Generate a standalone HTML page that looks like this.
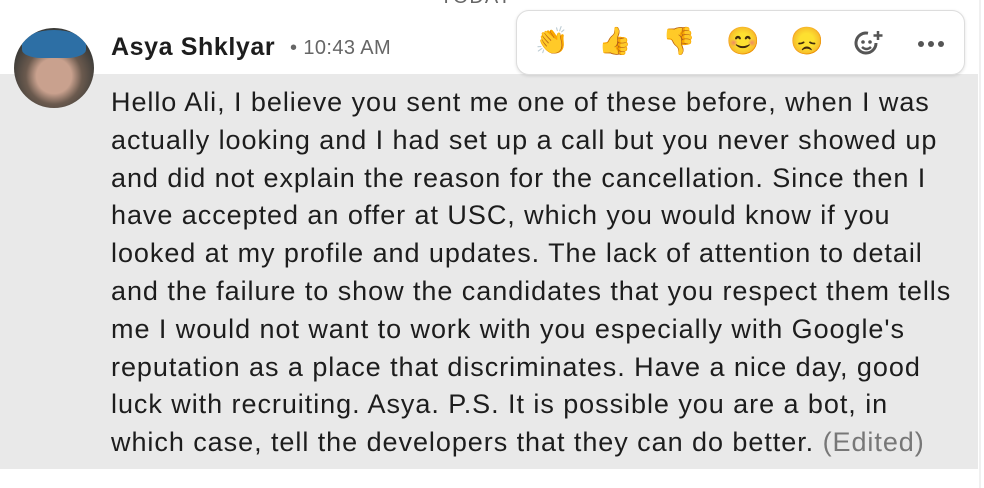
<!DOCTYPE html>
<html><head><meta charset="utf-8"><style>
body{margin:0;width:984px;height:488px;background:#fff;position:relative;overflow:hidden;font-family:"Liberation Sans",Helvetica,Arial,sans-serif;}
.today{position:absolute;left:440px;top:-14px;font-size:20px;color:#666;letter-spacing:1px}
.gray{position:absolute;left:0;top:74px;width:978px;height:395px;background:#e9e9e9}
.edge{position:absolute;left:979px;top:0;width:2px;height:488px;background:#f0f0f0}
.av{position:absolute;left:14px;top:28px;width:80px;height:80px;border-radius:50%;background:radial-gradient(circle at 50% 60%,#c9a18e 0 28%,#6b5a4e 45%,#3b3b38 70%);overflow:hidden}
.hair{position:absolute;left:8px;top:2px;width:64px;height:28px;border-radius:50% 50% 30% 30%;background:#2d6fa5}
.name{position:absolute;left:111px;top:33px;font-size:25px;font-weight:bold;color:#1d1d1d;letter-spacing:0.6px}
.time{position:absolute;left:290px;top:37px;font-size:20px;color:#666;letter-spacing:0.4px}
.msg{position:absolute;left:111px;top:84px;font-size:27px;line-height:37.8px;color:#1d1d1d;letter-spacing:0.95px;white-space:nowrap}
.ed{color:#777}
.bar{position:absolute;left:516px;top:10px;width:447px;height:63px;background:#fff;border:1px solid #ddd;border-radius:13px;box-shadow:0 1px 3px rgba(0,0,0,.12)}
.bar span{position:absolute;top:13px;font-size:27px;line-height:34px;font-family:"Noto Color Emoji","DejaVu Sans",sans-serif}
</style></head><body>
<div class="today">TODAY</div>
<div class="gray"></div>
<div class="edge"></div>
<div class="av"><div class="hair"></div></div>
<div class="name">Asya Shklyar</div>
<div class="time">• 10:43 AM</div>
<div class="msg">Hello Ali, I believe you sent me one of these before, when I was<br>actually looking and I had set up a call but you never showed up<br>and did not explain the reason for the cancellation. Since then I<br>have accepted an offer at USC, which you would know if you<br>looked at my profile and updates. The lack of attention to detail<br>and the failure to show the candidates that you respect them tells<br>me I would not want to work with you especially with Google's<br>reputation as a place that discriminates. Have a nice day, good<br>luck with recruiting. Asya. P.S. It is possible you are a bot, in<br>which case, tell the developers that they can do better. <span class="ed">(Edited)</span></div>
<div class="bar">
<span style="left:18px">👏</span>
<span style="left:81px">👍</span>
<span style="left:145px">👎</span>
<span style="left:209px">😊</span>
<span style="left:273px">😞</span>
<svg style="position:absolute;left:337px;top:18px" width="30" height="30" viewBox="0 0 30 30"><path d="M22 14a10 10 0 1 1-8-9.8" fill="none" stroke="#555" stroke-width="3"/><circle cx="9" cy="13" r="1.8" fill="#555"/><circle cx="16" cy="13" r="1.8" fill="#555"/><path d="M8 18q4.5 4 9 0" fill="none" stroke="#555" stroke-width="2.5"/><path d="M24 2v9M19.5 6.5h9" stroke="#555" stroke-width="2.5"/></svg>
<svg style="position:absolute;left:400px;top:29px" width="28" height="8"><circle cx="4" cy="4" r="3" fill="#555"/><circle cx="14" cy="4" r="3" fill="#555"/><circle cx="24" cy="4" r="3" fill="#555"/></svg>
</div>
</body></html>
